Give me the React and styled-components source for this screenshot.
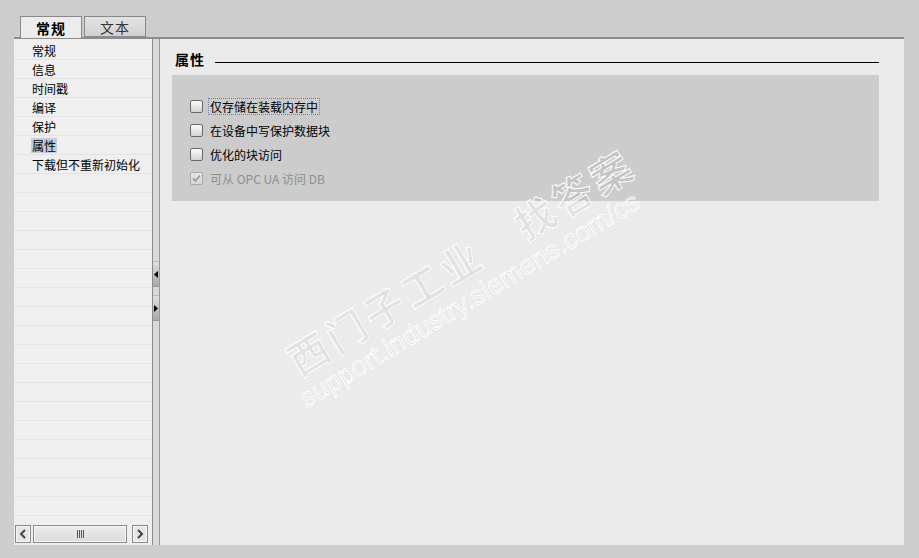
import React from 'react';
import styled, { createGlobalStyle } from 'styled-components';

const GlobalStyle = createGlobalStyle`
  html, body {
    margin: 0;
    padding: 0;
    background: #cdcdcd;
  }
  body {
    font-family: "Noto Sans CJK SC", "Noto Sans", sans-serif;
    font-size: 12px;
    color: #000;
  }
`;

const Page = styled.div`
  position: relative;
  width: 919px;
  height: 558px;
  padding: 16px 15px 13px 14px;
  box-sizing: border-box;
  display: flex;
  flex-direction: column;
  overflow: hidden;
`;

const TabBar = styled.div`
  display: flex;
  gap: 2px;
  padding-left: 6px;
  height: 21px;
  align-items: flex-end;
`;

const Tab = styled.div`
  width: 62px;
  height: ${(p) => (p.$active ? '22px' : '21px')};
  margin-bottom: ${(p) => (p.$active ? '-1px' : '0')};
  box-sizing: border-box;
  border: 1px solid #8a8a8a;
  border-bottom: ${(p) => (p.$active ? 'none' : '1px solid #8a8a8a')};
  background: ${(p) =>
    p.$active ? '#ececec' : 'linear-gradient(#e2e2e2, #d2d2d2)'};
  display: flex;
  align-items: center;
  justify-content: center;
  font-size: 14px;
  font-weight: ${(p) => (p.$active ? 700 : 400)};
  color: ${(p) => (p.$active ? '#000' : '#333')};
  letter-spacing: 1px;
  position: relative;
  z-index: 1;
`;

const Panel = styled.div`
  flex: 1;
  display: flex;
  border-top: 2px solid #8c8c8c;
  background: #ebebeb;
  min-height: 0;
`;

const Nav = styled.div`
  width: 138px;
  background: #efefef;
  display: flex;
  flex-direction: column;
  padding-top: 2px;
`;

const NavList = styled.div`
  flex: 1;
  background: repeating-linear-gradient(
    to bottom,
    transparent 0,
    transparent 18px,
    #e3e3e3 18px,
    #e3e3e3 19px
  );
  background-size: 100% 19px;
  background-repeat: repeat-y;
  margin-bottom: 8px;
`;

const NavItem = styled.div`
  height: 19px;
  display: flex;
  align-items: center;
  padding-left: 17px;
  line-height: 15px;
`;

const NavLabel = styled.span`
  background: ${(p) => (p.$selected ? '#c3ccd6' : 'transparent')};
  padding: 0 1px;
`;

const HScroll = styled.div`
  height: 18px;
  display: flex;
  gap: 2px;
  padding: 0 1px 2px 1px;
`;

const ScrollBtn = styled.div`
  width: 16px;
  box-sizing: border-box;
  border: 1px solid #8a8a8a;
  box-shadow: inset 0 0 0 1px #f7f7f7;
  background: #e6e6e6;
  display: flex;
  align-items: center;
  justify-content: center;
`;

const Thumb = styled.div`
  width: 94px;
  box-sizing: border-box;
  border: 1px solid #8a8a8a;
  box-shadow: inset 0 0 0 1px #f7f7f7;
  background: linear-gradient(#ececec, #dcdcdc);
  display: flex;
  align-items: center;
  justify-content: center;
  margin-right: 3px;
`;

const Grip = styled.div`
  width: 7px;
  height: 8px;
  background: repeating-linear-gradient(
    to right,
    #555 0,
    #555 1px,
    transparent 1px,
    transparent 2px
  );
`;

const Splitter = styled.div`
  width: 6px;
  border-left: 1px solid #8a8a8a;
  border-right: 1px solid #9a9a9a;
  background: #d9d9d9;
  display: flex;
  flex-direction: column;
  padding-top: 222px;
  gap: 8px;
`;

const SplitBtn = styled.div`
  height: 24px;
  background: linear-gradient(#e0e0e0, #a8a8a8);
  border-top: 1px solid #bdbdbd;
  border-bottom: 1px solid #9a9a9a;
  display: flex;
  align-items: center;
  justify-content: center;
`;

const Content = styled.div`
  flex: 1;
  padding: 10px 25px 0 12px;
  display: flex;
  flex-direction: column;
`;

const SectionHeader = styled.div`
  display: flex;
  align-items: center;
  gap: 10px;
  height: 20px;
  padding-left: 3px;
  margin-bottom: 6px;
`;

const SectionTitle = styled.div`
  font-size: 14px;
  font-weight: 700;
  letter-spacing: 1px;
`;

const Rule = styled.div`
  flex: 1;
  height: 1px;
  background: #000;
  margin-top: 7px;
`;

const Group = styled.div`
  background: #cccccc;
  height: 126px;
  box-sizing: border-box;
  padding: 24px 0 0 18px;
  display: flex;
  flex-direction: column;
  gap: 9px;
`;

const Row = styled.label`
  display: flex;
  align-items: center;
  gap: 6px;
  height: 15px;
  color: ${(p) => (p.$disabled ? '#8e8e8e' : '#000')};
`;

const Box = styled.span`
  width: 13px;
  height: 13px;
  box-sizing: border-box;
  border: 1px solid ${(p) => (p.$disabled ? '#a8a8a8' : '#6a6a6a')};
  border-radius: 2px;
  background: ${(p) =>
    p.$disabled
      ? 'linear-gradient(#e6e6e6, #d6d6d6)'
      : 'linear-gradient(#fafafa, #d4d4d4)'};
  display: flex;
  align-items: center;
  justify-content: center;
`;

const Label = styled.span`
  line-height: 15px;
  padding: 0 1px;
  outline: ${(p) => (p.$focused ? '1px dotted #6b7fb8' : 'none')};
  outline-offset: 0;
`;

const Watermark = styled.div`
  position: absolute;
  left: 458px;
  top: 280px;
  transform: translate(-50%, -50%) rotate(-31deg);
  display: flex;
  flex-direction: column;
  align-items: center;
  pointer-events: none;
  color: transparent;
  -webkit-text-stroke: 1px rgba(255, 255, 255, 0.95);
  text-shadow: 1px 1px 1px rgba(0, 0, 0, 0.04);
  white-space: nowrap;
`;

const MarkCn = styled.div`
  font-family: "Noto Sans CJK SC", sans-serif;
  font-size: 40px;
  font-weight: 700;
  letter-spacing: 4px;
  line-height: 46px;
  margin-left: 24px;
`;

const MarkUrl = styled.div`
  font-family: "Liberation Sans", Arial, sans-serif;
  font-size: 27px;
  line-height: 30px;
`;

const navItems = ['常规', '信息', '时间戳', '编译', '保护', '属性', '下载但不重新初始化'];

const options = [
  { text: '仅存储在装载内存中', focused: true },
  { text: '在设备中写保护数据块' },
  { text: '优化的块访问' },
  { text: '可从 OPC UA 访问 DB', disabled: true, checked: true },
];

const Check = () => (
  <svg width="11" height="11" viewBox="0 0 11 11">
    <path d="M2 5.5 L4.5 8 L9 2.5" fill="none" stroke="#9a9a9a" strokeWidth="1.8" />
  </svg>
);

export default function App() {
  return (
    <>
      <GlobalStyle />
      <Page>
        <TabBar>
          <Tab $active>常规</Tab>
          <Tab>文本</Tab>
        </TabBar>
        <Panel>
          <Nav>
            <NavList>
              {navItems.map((n) => (
                <NavItem key={n}>
                  <NavLabel $selected={n === '属性'}>{n}</NavLabel>
                </NavItem>
              ))}
            </NavList>
            <HScroll>
              <ScrollBtn>
                <svg width="8" height="10" viewBox="0 0 8 10">
                  <path d="M6 1 L2 5 L6 9" fill="none" stroke="#444" strokeWidth="2" />
                </svg>
              </ScrollBtn>
              <Thumb>
                <Grip />
              </Thumb>
              <ScrollBtn>
                <svg width="8" height="10" viewBox="0 0 8 10">
                  <path d="M2 1 L6 5 L2 9" fill="none" stroke="#444" strokeWidth="2" />
                </svg>
              </ScrollBtn>
            </HScroll>
          </Nav>
          <Splitter>
            <SplitBtn>
              <svg width="4" height="7" viewBox="0 0 4 7">
                <path d="M4 0 L0 3.5 L4 7 Z" fill="#000" />
              </svg>
            </SplitBtn>
            <SplitBtn>
              <svg width="4" height="7" viewBox="0 0 4 7">
                <path d="M0 0 L4 3.5 L0 7 Z" fill="#000" />
              </svg>
            </SplitBtn>
          </Splitter>
          <Content>
            <SectionHeader>
              <SectionTitle>属性</SectionTitle>
              <Rule />
            </SectionHeader>
            <Group>
              {options.map((o) => (
                <Row key={o.text} $disabled={o.disabled}>
                  <Box $disabled={o.disabled}>{o.checked && <Check />}</Box>
                  <Label $focused={o.focused}>{o.text}</Label>
                </Row>
              ))}
            </Group>
          </Content>
        </Panel>
        <Watermark>
          <MarkCn>西门子工业　找答案</MarkCn>
          <MarkUrl>support.industry.siemens.com/cs</MarkUrl>
        </Watermark>
      </Page>
    </>
  );
}
